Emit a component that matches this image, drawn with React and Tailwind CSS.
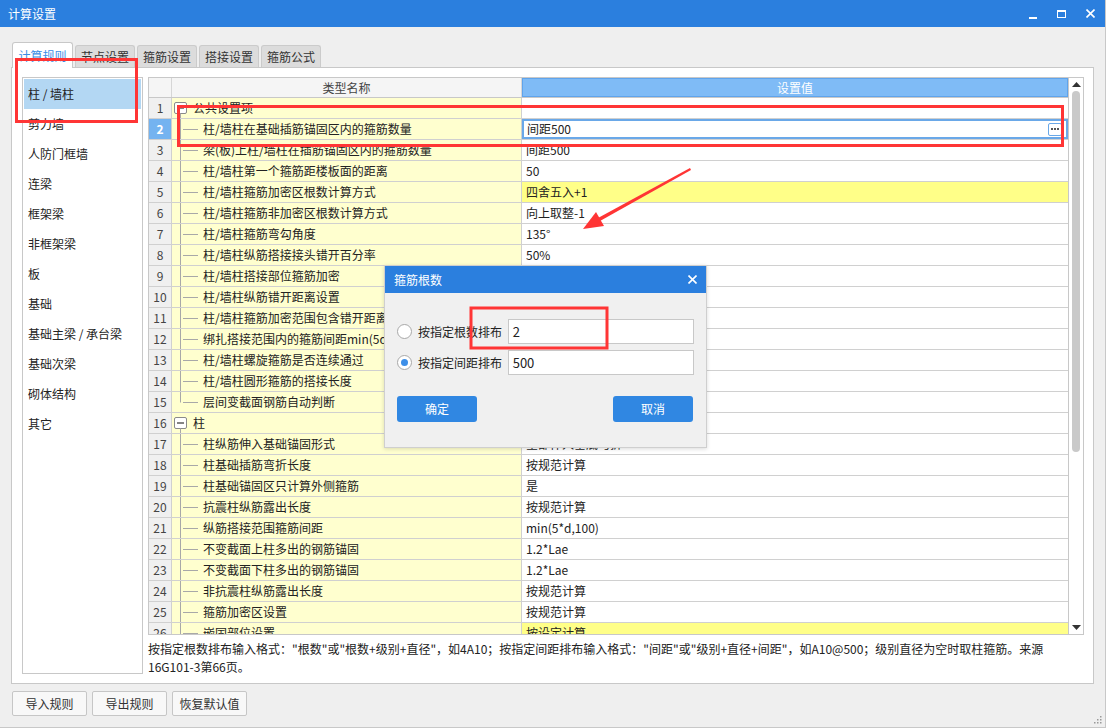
import React from 'react';

const rows = [
  { n: 1, group: true, name: '公共设置项', value: '' },
  { n: 2, name: '柱/墙柱在基础插筋锚固区内的箍筋数量', value: '间距500', editing: true },
  { n: 3, name: '梁(板)上柱/墙柱在插筋锚固区内的箍筋数量', value: '间距500' },
  { n: 4, name: '柱/墙柱第一个箍筋距楼板面的距离', value: '50' },
  { n: 5, name: '柱/墙柱箍筋加密区根数计算方式', value: '四舍五入+1', hl: true },
  { n: 6, name: '柱/墙柱箍筋非加密区根数计算方式', value: '向上取整-1' },
  { n: 7, name: '柱/墙柱箍筋弯勾角度', value: '135°' },
  { n: 8, name: '柱/墙柱纵筋搭接接头错开百分率', value: '50%' },
  { n: 9, name: '柱/墙柱搭接部位箍筋加密', value: '' },
  { n: 10, name: '柱/墙柱纵筋错开距离设置', value: '' },
  { n: 11, name: '柱/墙柱箍筋加密范围包含错开距离', value: '' },
  { n: 12, name: '绑扎搭接范围内的箍筋间距min(5d,100)', value: '' },
  { n: 13, name: '柱/墙柱螺旋箍筋是否连续通过', value: '' },
  { n: 14, name: '柱/墙柱圆形箍筋的搭接长度', value: '' },
  { n: 15, name: '层间变截面钢筋自动判断', value: '', last: true },
  { n: 16, group: true, name: '柱', value: '' },
  { n: 17, name: '柱纵筋伸入基础锚固形式', value: '全部伸入基底弯折' },
  { n: 18, name: '柱基础插筋弯折长度', value: '按规范计算' },
  { n: 19, name: '柱基础锚固区只计算外侧箍筋', value: '是' },
  { n: 20, name: '抗震柱纵筋露出长度', value: '按规范计算' },
  { n: 21, name: '纵筋搭接范围箍筋间距', value: 'min(5*d,100)' },
  { n: 22, name: '不变截面上柱多出的钢筋锚固', value: '1.2*Lae' },
  { n: 23, name: '不变截面下柱多出的钢筋锚固', value: '1.2*Lae' },
  { n: 24, name: '非抗震柱纵筋露出长度', value: '按规范计算' },
  { n: 25, name: '箍筋加密区设置', value: '按规范计算' },
  { n: 26, name: '嵌固部位设置', value: '按设定计算', hl: true },
];

const sideItems = ['柱 / 墙柱', '剪力墙', '人防门框墙', '连梁', '框架梁', '非框架梁', '板', '基础', '基础主梁 / 承台梁', '基础次梁', '砌体结构', '其它'];
const tabs = ['计算规则', '节点设置', '箍筋设置', '搭接设置', '箍筋公式'];

function TreeGlyph({ group, last }) {
  if (group) {
    return (
      <svg width="22" height="20" className="shrink-0">
        <rect x="2.5" y="4.5" width="12" height="11" rx="1.5" fill="#fff" stroke="#8a8a8a" />
        <line x1="5" y1="10" x2="12" y2="10" stroke="#333" strokeWidth="1.2" />
        <line x1="8.5" y1="15.5" x2="8.5" y2="20" stroke="#a8a8a8" />
      </svg>
    );
  }
  return (
    <svg width="31" height="20" className="shrink-0">
      <line x1="8.5" y1="0" x2="8.5" y2={last ? 10.5 : 20} stroke="#a8a8a8" />
      <line x1="11" y1="10.5" x2="26" y2="10.5" stroke="#a8a8a8" />
    </svg>
  );
}

function Radio({ checked }) {
  return (
    <div className="w-[15px] h-[15px] rounded-full border border-[#a8a8a8] bg-white flex items-center justify-center shrink-0">
      {checked && <div className="w-[7px] h-[7px] rounded-full bg-[#3d8fe8]" />}
    </div>
  );
}

export default function App() {
  return (
    <div className="relative w-[1106px] h-[728px] overflow-hidden bg-[#efefef] border-r border-b border-[#c8c8c8] text-[12px] text-[#222] font-['Microsoft_YaHei','Noto_Sans_CJK_SC',sans-serif]">
      {/* title bar */}
      <div className="h-[27px] bg-[#2b7fde] flex items-center pl-[8px] text-white text-[12px]">
        <span>计算设置</span>
        <div className="ml-auto flex items-center h-full">
          <div className="w-[8px] h-[2px] bg-white mt-[8px] mr-[20px]" />
          <div className="w-[9px] h-[8px] border border-white border-t-2 mr-[20px]" />
          <svg width="9" height="9" className="mr-[10px]">
            <path d="M0.5 0.5 L8.5 8.5 M8.5 0.5 L0.5 8.5" stroke="#fff" strokeWidth="1.6" />
          </svg>
        </div>
      </div>

      {/* tabs */}
      <div className="mt-[15px] h-[25px] pl-[12px] flex items-end gap-[2px]">
        {tabs.map((t, i) =>
          i === 0 ? (
            <div key={t} className="relative z-10 mb-[-1px] h-[26px] w-[61px] bg-white border border-b-0 border-[#c8c8c8] rounded-t-[3px] flex items-center justify-center text-[#3a8ee6]">
              {t}
            </div>
          ) : (
            <div key={t} className="h-[22px] w-[60px] bg-[#dcdcdc] border border-b-0 border-[#cbcbcb] rounded-t-[3px] flex items-center justify-center text-[#333]">
              {t}
            </div>
          )
        )}
      </div>

      {/* main panel */}
      <div className="ml-[11px] w-[1083px] h-[617px] border border-[#c8c8c8] bg-white flex pt-[9px] pl-[10px] gap-[5px]">
        {/* sidebar */}
        <div className="w-[121px] h-[597px] border border-[#c8c8c8] p-[1px] shrink-0">
          {sideItems.map((s, i) => (
            <div key={s} className={`h-[30px] flex items-center pl-[4px] ${i === 0 ? 'bg-[#b3d7f3]' : ''}`}>
              {s}
            </div>
          ))}
        </div>

        {/* right column */}
        <div className="w-[936px] shrink-0">
          <div className="h-[558px] border border-[#c8c8c8] flex overflow-hidden">
            <div className="flex-1 overflow-hidden">
              {/* header */}
              <div className="h-[20px] flex border-b border-[#c8c8c8] bg-[#f5f5f5]">
                <div className="w-[23px] border-r border-[#d6d6d6]" />
                <div className="w-[350px] border-r border-[#d6d6d6] flex items-center justify-center text-[#444]">类型名称</div>
                <div className="flex-1 bg-[#7fbbf6] border border-[#5fa4ec] flex items-center justify-center text-white">设置值</div>
              </div>
              {rows.map((r) => (
                <div key={r.n} className="h-[21px] flex border-b border-[#d0d0d0]">
                  <div className={`w-[23px] border-r border-[#d0d0d0] flex items-center justify-center ${r.editing ? 'bg-[#74b3f0] text-white font-bold' : 'bg-[#f0f0f0] text-[#444]'}`}>
                    {r.n}
                  </div>
                  <div className="w-[350px] border-r border-[#d0d0d0] bg-[#ffffcf] flex items-center whitespace-nowrap overflow-hidden">
                    <TreeGlyph group={r.group} last={r.last} />
                    <span className={r.group ? 'ml-[-1px]' : ''}>{r.name}</span>
                  </div>
                  {r.editing ? (
                    <div className="flex-1 border-2 border-[#6aa8e8] flex items-center pl-[3px] pr-[4px]">
                      <span>{r.value}</span>
                      <div className="ml-auto w-[14px] h-[13px] border border-[#6aa8e8] rounded-[2px] bg-white flex items-center justify-center gap-[1px]">
                        <div className="w-[2px] h-[2px] bg-[#555]" />
                        <div className="w-[2px] h-[2px] bg-[#555]" />
                        <div className="w-[2px] h-[2px] bg-[#555]" />
                      </div>
                    </div>
                  ) : (
                    <div className={`flex-1 flex items-center pl-[4px] ${r.hl ? 'bg-[#ffff88]' : 'bg-white'}`}>{r.value}</div>
                  )}
                </div>
              ))}
            </div>
            {/* scrollbar */}
            <div className="w-[15px] border-l border-[#c8c8c8] bg-white flex flex-col items-center">
              <svg width="9" height="5" className="mt-[4px]">
                <path d="M0 5 L4.5 0 L9 5 Z" fill="#333" />
              </svg>
              <div className="mt-[4px] w-[8px] h-[361px] rounded-full bg-[#c9c9c9]" />
              <div className="flex-1" />
              <svg width="9" height="5" className="mb-[4px]">
                <path d="M0 0 L9 0 L4.5 5 Z" fill="#333" />
              </svg>
            </div>
          </div>
          <div className="mt-[5px] leading-[18px] pr-[40px]">
            按指定根数排布输入格式："根数"或"根数+级别+直径"，如4A10；按指定间距排布输入格式："间距"或"级别+直径+间距"，如A10@500；级别直径为空时取柱箍筋。来源
            <br />
            16G101-3第66页。
          </div>
        </div>
      </div>

      {/* bottom buttons */}
      <div className="mt-[7px] ml-[12px] flex gap-[5px]">
        {['导入规则', '导出规则', '恢复默认值'].map((b) => (
          <div key={b} className="w-[75px] h-[25px] border border-[#c6c6c6] rounded-[2px] bg-[#f8f8f8] flex items-center justify-center text-[#333]">
            {b}
          </div>
        ))}
      </div>

      {/* resize grip */}
      <svg width="8" height="8" className="absolute right-[3px] bottom-[3px]">
        <rect x="6" y="0" width="1.5" height="1.5" fill="#999" />
        <rect x="3" y="3" width="1.5" height="1.5" fill="#999" />
        <rect x="6" y="3" width="1.5" height="1.5" fill="#999" />
        <rect x="0" y="6" width="1.5" height="1.5" fill="#999" />
        <rect x="3" y="6" width="1.5" height="1.5" fill="#999" />
        <rect x="6" y="6" width="1.5" height="1.5" fill="#999" />
      </svg>

      {/* dialog */}
      <div className="absolute z-20 left-[384px] top-[265px] w-[323px] h-[183px] bg-[#f0f0f0] border border-[#cfcfcf] shadow-[0_1px_4px_rgba(0,0,0,0.15)]">
        <div className="h-[27px] bg-[#2b7fde] flex items-center pl-[9px] pr-[9px] text-white">
          <span>箍筋根数</span>
          <svg width="9" height="9" className="ml-auto">
            <path d="M0.5 0.5 L8.5 8.5 M8.5 0.5 L0.5 8.5" stroke="#fff" strokeWidth="1.6" />
          </svg>
        </div>
        <div className="pt-[26px] px-[12px]">
          <div className="h-[25px] flex items-center">
            <Radio />
            <span className="ml-[6px] w-[90px]">按指定根数排布</span>
            <div className="w-[187px] h-[25px] bg-white border border-[#c8c8c8] flex items-center pl-[4px] text-[13px]">2</div>
          </div>
          <div className="mt-[6px] h-[25px] flex items-center">
            <Radio checked />
            <span className="ml-[6px] w-[90px]">按指定间距排布</span>
            <div className="w-[187px] h-[25px] bg-white border border-[#c8c8c8] flex items-center pl-[4px] text-[13px]">500</div>
          </div>
          <div className="mt-[21px] flex justify-between pr-[1px]">
            <div className="w-[80px] h-[26px] rounded-[3px] bg-[#3087e2] text-white flex items-center justify-center">确定</div>
            <div className="w-[80px] h-[26px] rounded-[3px] bg-[#3087e2] text-white flex items-center justify-center">取消</div>
          </div>
        </div>
      </div>

      {/* red annotations */}
      <svg width="1106" height="728" className="absolute z-30 left-0 top-0 pointer-events-none">
        <rect x="16.5" y="59.5" width="120" height="62" fill="none" stroke="#ff3535" strokeWidth="3" />
        <rect x="178.5" y="106.5" width="884" height="39" fill="none" stroke="#ff3535" strokeWidth="3" />
        <rect x="471" y="308" width="136" height="40" fill="none" stroke="#ff3535" strokeWidth="3" />
        <path d="M690 168 L691 170 L600 221 L598 218 Z" fill="#ff3535" />
        <path d="M583 229 L596 212 L604 226 Z" fill="#ff3535" />
      </svg>
    </div>
  );
}
